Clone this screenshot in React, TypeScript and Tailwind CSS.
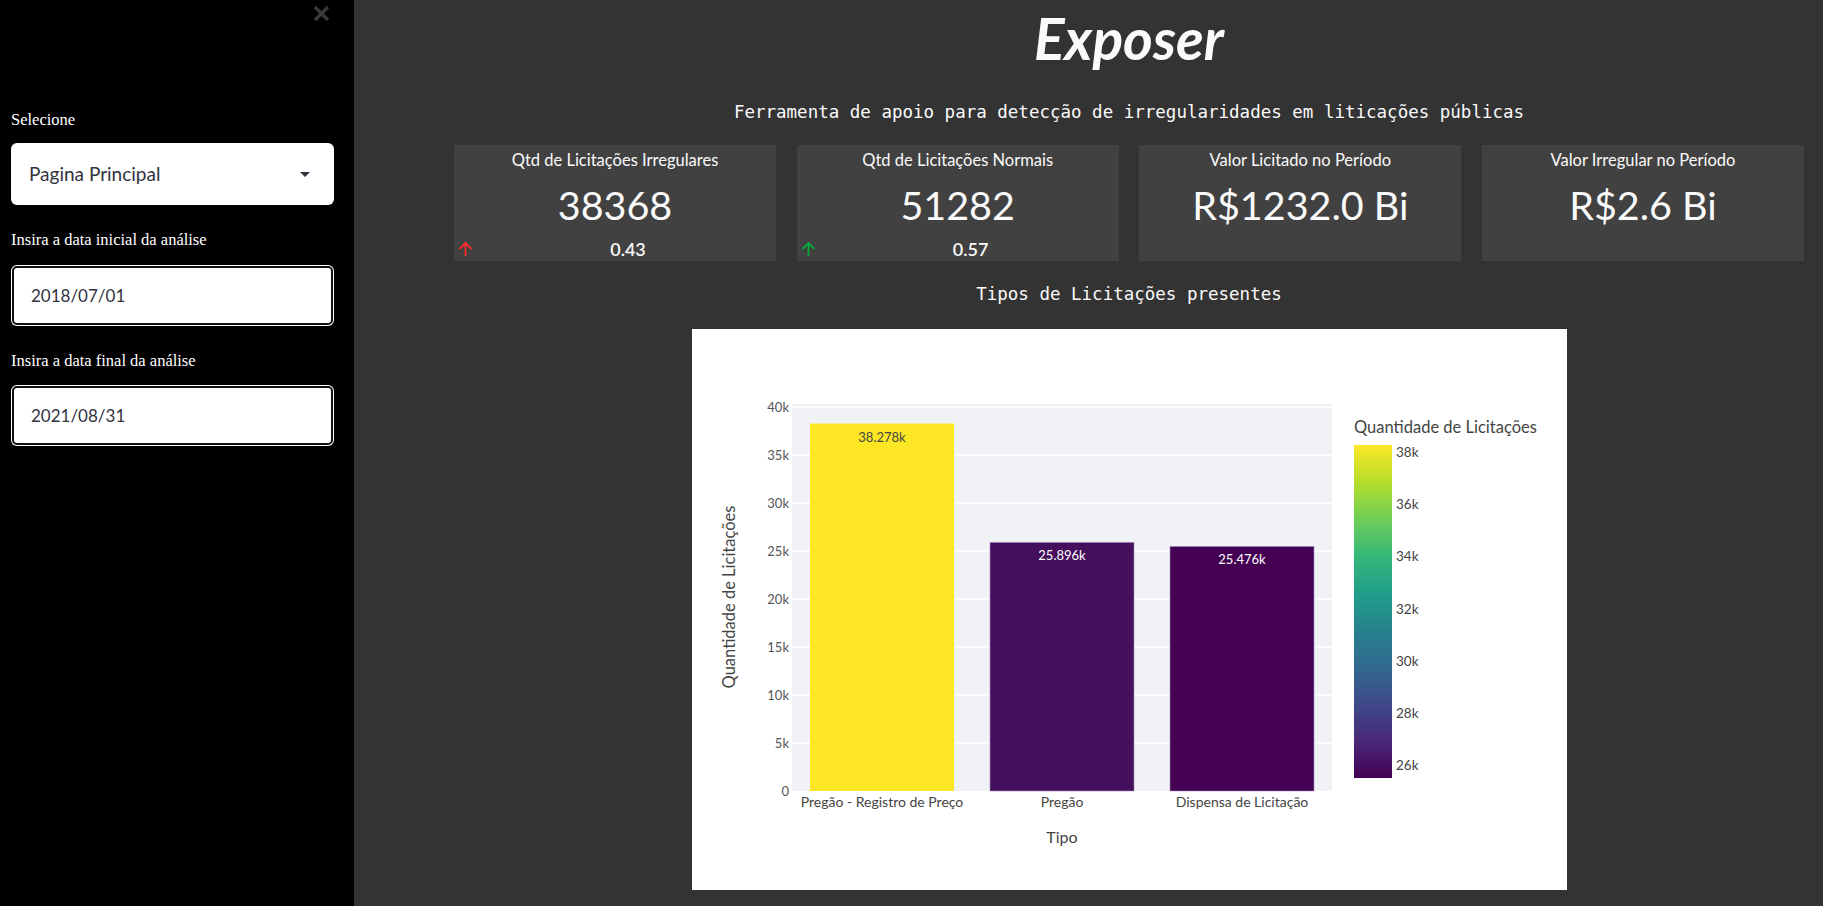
import clsx from 'clsx'

const sans = "font-['Lato','Open_Sans',sans-serif]"
const mono = "font-['DejaVu_Sans_Mono','Liberation_Mono',monospace]"
const serif = "font-['Liberation_Serif','Times_New_Roman',serif]"

interface Metric {
  title: string
  value: string
  delta?: string
  up?: 'red' | 'green'
}

const metrics: Metric[] = [
  { title: 'Qtd de Licitações Irregulares', value: '38368', delta: '0.43', up: 'red' },
  { title: 'Qtd de Licitações Normais', value: '51282', delta: '0.57', up: 'green' },
  { title: 'Valor Licitado no Período', value: 'R$1232.0 Bi' },
  { title: 'Valor Irregular no Período', value: 'R$2.6 Bi' },
]

function ArrowUp({ color }: { color: string }) {
  return (
    <svg width="15" height="16" viewBox="0 0 15 16" fill="none">
      <path d="M7.5 15V2M1.5 8L7.5 2L13.5 8" stroke={color} strokeWidth="1.8" />
    </svg>
  )
}

function MetricCard({ m }: { m: Metric }) {
  return (
    <div className="flex h-[116px] w-[322px] flex-col items-center bg-[#414141] pt-[4px] text-[#fafafa]">
      <div className="text-[16.5px] leading-[22px]">{m.title}</div>
      <div className="mt-[10px] text-[39.5px] leading-[48px]">{m.value}</div>
      {m.delta && (
        <div className="mt-[10px] flex w-full items-center">
          <div className="flex w-[26px] justify-start pl-[4px]">
            <ArrowUp color={m.up === 'red' ? '#ff2b2b' : '#09ab3b'} />
          </div>
          <div className="flex-1 text-center text-[18px] font-semibold leading-[20px]">{m.delta}</div>
        </div>
      )}
    </div>
  )
}

const bars = [
  { label: 'Pregão - Registro de Preço', value: 38278, color: '#fde725', text: '#444444' },
  { label: 'Pregão', value: 25896, color: '#460f5d', text: '#ffffff' },
  { label: 'Dispensa de Licitação', value: 25476, color: '#440154', text: '#ffffff' },
]

function Chart() {
  const base = 462
  const k = 0.0096
  const ticks = [0, 5, 10, 15, 20, 25, 30, 35, 40]
  const cbTicks = [
    { t: '38k', y: 123 },
    { t: '36k', y: 175 },
    { t: '34k', y: 227 },
    { t: '32k', y: 280 },
    { t: '30k', y: 332 },
    { t: '28k', y: 384 },
    { t: '26k', y: 436 },
  ]
  return (
    <svg width="875" height="561" viewBox="0 0 875 561" style={{ fontFamily: 'Lato, "Open Sans", sans-serif' }}>
      <defs>
        <linearGradient id="viridis" x1="0" y1="1" x2="0" y2="0">
          <stop offset="0" stopColor="#440154" />
          <stop offset="0.111" stopColor="#482878" />
          <stop offset="0.222" stopColor="#3e4989" />
          <stop offset="0.333" stopColor="#31688e" />
          <stop offset="0.444" stopColor="#26828e" />
          <stop offset="0.555" stopColor="#1f9e89" />
          <stop offset="0.666" stopColor="#35b779" />
          <stop offset="0.777" stopColor="#6ece58" />
          <stop offset="0.888" stopColor="#b5de2b" />
          <stop offset="1" stopColor="#fde725" />
        </linearGradient>
      </defs>
      <rect x="100" y="75" width="540" height="387" fill="#f0f2f6" />
      {ticks.map((t) => {
        const y = base - t * 1000 * k
        return (
          <g key={t}>
            {t > 0 && <line x1="100" x2="640" y1={y} y2={y} stroke="#ffffff" strokeWidth="1.5" />}
            <text x="97" y={y + 4.5} textAnchor="end" fontSize="13" fill="#555">
              {t === 0 ? '0' : `${t}k`}
            </text>
          </g>
        )
      })}
      {bars.map((b, i) => {
        const x = 118 + i * 180
        const h = b.value * k
        return (
          <g key={b.label}>
            <rect x={x} y={base - h} width="144" height={h} fill={b.color} stroke="#a58cc0" strokeWidth="0.6" strokeOpacity={i === 0 ? 0 : 1} />
            <text x={x + 72} y={base - h + 18} textAnchor="middle" fontSize="13" fill={b.text}>
              {(b.value / 1000).toFixed(3)}k
            </text>
            <text x={x + 72} y={478} textAnchor="middle" fontSize="14" fill="#444">
              {b.label}
            </text>
          </g>
        )
      })}
      <text x="370" y="514" textAnchor="middle" fontSize="16" fill="#444">
        Tipo
      </text>
      <text x="43" y="268" textAnchor="middle" fontSize="16.5" fill="#444" transform="rotate(-90 43 268)">
        Quantidade de Licitações
      </text>
      <text x="662" y="104" fontSize="16.5" fill="#444">
        Quantidade de Licitações
      </text>
      <rect x="662" y="116" width="38" height="333" fill="url(#viridis)" />
      {cbTicks.map((c) => (
        <text key={c.t} x="704" y={c.y + 4.5} fontSize="13.5" fill="#444">
          {c.t}
        </text>
      ))}
    </svg>
  )
}

export default function App() {
  return (
    <div className="flex h-[906px] w-full overflow-hidden">
      <aside className={clsx('flex h-full w-[354px] shrink-0 flex-col bg-black pl-[11px]', sans)}>
        <div className="flex justify-end pr-[24px] pt-[5px]">
          <svg width="17" height="17" viewBox="0 0 17 17">
            <path d="M2 2L15 15M15 2L2 15" stroke="#3a3a3a" strokeWidth="3.2" />
          </svg>
        </div>
        <div className={clsx('mt-[88px] text-[16.5px] leading-[20px] text-white', serif)}>Selecione</div>
        <div className="mt-[13px] flex h-[62px] w-[323px] items-center justify-between rounded-[6px] bg-white pl-[18px] pr-[24px] text-[19px] text-[#31333f]">
          <span>Pagina Principal</span>
          <svg width="10" height="5" viewBox="0 0 10 5">
            <path d="M0 0H10L5 5Z" fill="#31333f" />
          </svg>
        </div>
        <div className={clsx('mt-[25px] text-[16.5px] leading-[20px] text-white', serif)}>
          Insira a data inicial da análise
        </div>
        <div className="mt-[15px] h-[61px] w-[323px] rounded-[6px] bg-white p-px">
          <div className="flex h-full items-center rounded-[5px] border-2 border-[#111] pl-[17px] text-[17px] text-[#31333f]">
            2018/07/01
          </div>
        </div>
        <div className={clsx('mt-[25px] text-[16.5px] leading-[20px] text-white', serif)}>
          Insira a data final da análise
        </div>
        <div className="mt-[14px] h-[61px] w-[323px] rounded-[6px] bg-white p-px">
          <div className="flex h-full items-center rounded-[5px] border-2 border-[#111] pl-[17px] text-[17px] text-[#31333f]">
            2021/08/31
          </div>
        </div>
      </aside>
      <main className={clsx('h-full flex-1 bg-[#333333] pl-[100px]', sans)}>
        <div className="flex w-[1350px] flex-col items-center pt-[6px]">
          <h1 className="text-[57px] font-bold italic leading-[64px] text-[#fafafa]">Exposer</h1>
          <p className={clsx('mt-[30px] text-[17.5px] leading-[24px] text-[#fafafa]', mono)}>
            Ferramenta de apoio para detecção de irregularidades em liticações públicas
          </p>
          <div className="mt-[21px] flex w-full justify-between">
            {metrics.map((m) => (
              <MetricCard key={m.title} m={m} />
            ))}
          </div>
          <p className={clsx('mt-[21px] text-[17.5px] leading-[24px] text-[#fafafa]', mono)}>
            Tipos de Licitações presentes
          </p>
          <div className="mt-[23px] h-[561px] w-[875px] bg-white">
            <Chart />
          </div>
        </div>
      </main>
    </div>
  )
}
